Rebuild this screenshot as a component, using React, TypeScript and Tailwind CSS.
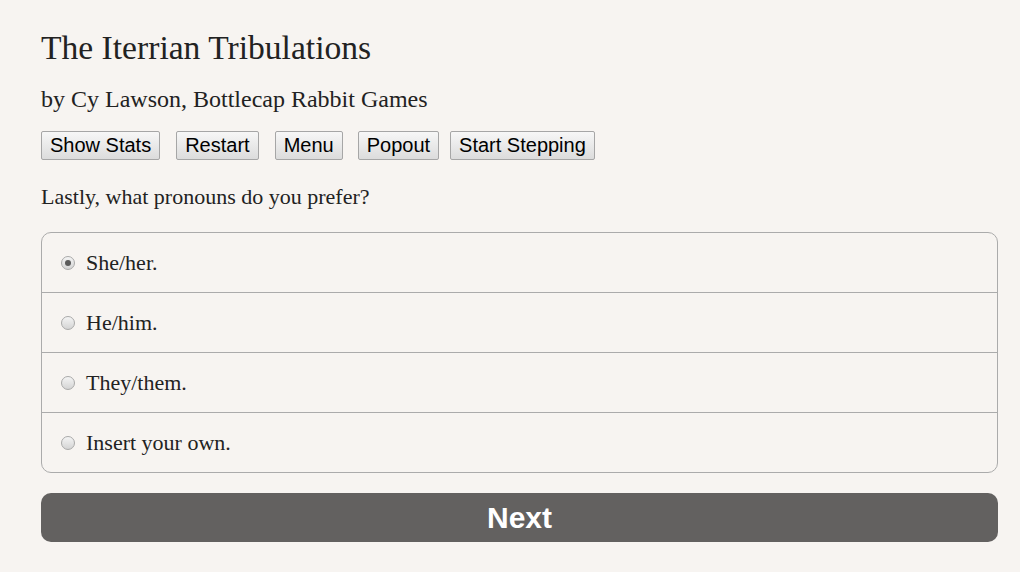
import { useState } from "react";

const OPTIONS = ["She/her.", "He/him.", "They/them.", "Insert your own."];

const TOOLBAR = [
  { label: "Show Stats", gap: "mr-[16px]" },
  { label: "Restart", gap: "mr-[16px]" },
  { label: "Menu", gap: "mr-[15px]" },
  { label: "Popout", gap: "mr-[11px]" },
  { label: "Start Stepping", gap: "" },
];

function Radio({ checked }: { checked: boolean }) {
  return (
    <span className="flex h-[14px] w-[14px] items-center justify-center rounded-full border border-[#a9a9a9] bg-gradient-to-b from-[#f4f4f4] to-[#d4d4d4]">
      {checked && <span className="h-[6px] w-[6px] rounded-full bg-[#5a5a5a]" />}
    </span>
  );
}

export default function App() {
  const [choice, setChoice] = useState(0);

  return (
    <div className="min-h-[572px] bg-[#f7f4f1] pl-[41px] pr-[22px] pt-[28px] text-[#222] [font-family:'Liberation_Serif',serif]">
      <h1 className="text-[33.6px] leading-[40px]">The Iterrian Tribulations</h1>
      <h2 className="mt-[16px] text-[24px] leading-[30px]">
        by Cy Lawson, Bottlecap Rabbit Games
      </h2>

      <div className="mt-[17px] flex">
        {TOOLBAR.map((b) => (
          <button
            key={b.label}
            className={`${b.gap} h-[29px] rounded-[2px] border border-[#a6a6a6] bg-gradient-to-b from-[#f7f7f7] to-[#dcdcdc] px-[8px] text-[20px] leading-[23px] text-black [font-family:'Liberation_Sans',sans-serif]`}
          >
            {b.label}
          </button>
        ))}
      </div>

      <p className="mt-[23px] text-[22px] leading-[28px]">
        Lastly, what pronouns do you prefer?
      </p>

      <div className="mt-[21px] overflow-hidden rounded-[10px] border border-[#ababab]">
        {OPTIONS.map((opt, i) => (
          <label
            key={opt}
            onClick={() => setChoice(i)}
            className={`flex cursor-pointer items-center pl-[19px] ${
              i > 0 ? "h-[60px] border-t border-[#ababab]" : "h-[59px]"
            }`}
          >
            <Radio checked={choice === i} />
            <span className="ml-[11px] text-[22px] leading-[28px]">{opt}</span>
          </label>
        ))}
      </div>

      <button className="mt-[20px] flex h-[49px] w-full items-center justify-center rounded-[10px] bg-[#636160] text-[30px] font-bold text-white [font-family:'Liberation_Sans',sans-serif]">
        Next
      </button>
    </div>
  );
}
